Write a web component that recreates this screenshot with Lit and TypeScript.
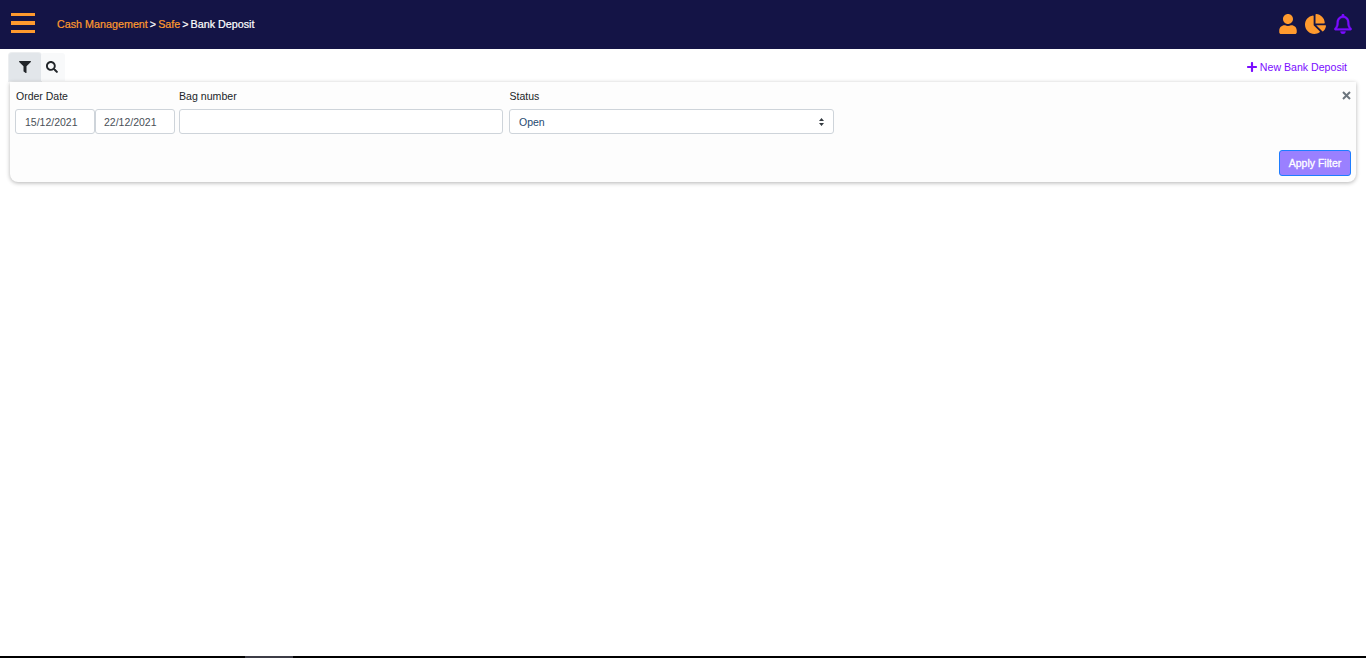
import { LitElement, html, css } from "lit";
import { customElement } from "lit/decorators.js";

const bars = html`<svg width="24" height="21" viewBox="0 0 24 21"><path fill="#ff9a2e" d="M0 0h24v3H0zM0 8h24v4H0zM0 17h24v3H0z"/></svg>`;
const user = html`<svg width="18" height="20" viewBox="0 0 448 512"><path fill="#ff9a2e" d="M224 256c70.7 0 128-57.3 128-128S294.700 0 224 0 96 57.300 96 128s57.300 128 128 128zm89.600 32h-16.700c-22.200 10.200-46.900 16-72.900 16s-50.600-5.800-72.900-16h-16.700C60.200 288 0 348.200 0 422.400V464c0 26.500 21.500 48 48 48h352c26.500 0 48-21.500 48-48v-41.600c0-74.200-60.200-134.400-134.400-134.400z"/></svg>`;
const pie = html`<svg width="21" height="20" viewBox="0 0 544 512"><path fill="#ff9a2e" d="M527.790 288H290.500l158.030 158.030c6.040 6.040 15.980 6.530 22.190.68 38.700-36.460 65.320-85.610 73.130-140.860 1.340-9.460-6.510-17.850-16.060-17.850zm-15.830-64.800C503.720 103.740 408.260 8.280 288.800.04 279.680-.59 272 7.100 272 16.240V240h223.770c9.140 0 16.820-7.680 16.190-16.800zM224 288V50.710c0-9.550-8.390-17.400-17.840-16.060C86.990 51.490-4.100 155.600.14 280.370 4.500 408.510 114.830 513.590 243.030 511.980c50.400-.63 96.970-16.870 135.260-44.030 7.900-5.600 8.420-17.230 1.570-24.080L224 288z"/></svg>`;
const bell = html`<svg width="18" height="20" viewBox="0 0 448 512"><path fill="#7a0cff" stroke="#7a0cff" stroke-width="10" d="M439.390 362.290c-19.320-20.760-55.470-51.990-55.470-154.290 0-77.700-54.480-139.900-127.940-155.160V32c0-17.670-14.320-32-31.980-32s-31.980 14.330-31.980 32v20.840C118.560 68.100 64.080 130.300 64.080 208c0 102.300-36.150 133.530-55.470 154.290-6 6.450-8.660 14.160-8.610 21.710.11 16.400 12.980 32 32.100 32h383.800c19.120 0 32-15.600 32.100-32 .05-7.550-2.610-15.270-8.610-21.710zM67.530 368c21.220-27.970 44.420-74.330 44.530-159.420 0-.2-.06-.38-.06-.58 0-61.860 50.140-112 112-112s112 50.140 112 112c0 .2-.06.380-.06.580.11 85.100 23.310 131.460 44.530 159.420H67.530zM224 512c35.320 0 63.970-28.650 63.970-64H160.030c0 35.350 28.650 64 63.970 64z"/></svg>`;
const filter = html`<svg width="12" height="12" viewBox="0 0 512 512"><path fill="#212529" d="M487.976 0H24.028C2.710 0-8.047 25.866 7.058 40.971L192 225.941V432c0 7.831 3.821 15.170 10.237 19.662l80 55.980C298.020 518.690 320 507.493 320 487.980V225.941l184.947-184.970C520.021 25.896 509.338 0 487.976 0z"/></svg>`;
const search = html`<svg width="12" height="12" viewBox="0 0 512 512"><path fill="#212529" d="M505 442.700L405.300 343c-4.500-4.500-10.600-7-17-7H372c27.600-35.300 44-79.700 44-128C416 93.100 322.900 0 208 0S0 93.100 0 208s93.100 208 208 208c48.300 0 92.700-16.400 128-44v16.300c0 6.400 2.500 12.500 7 17l99.700 99.700c9.400 9.400 24.600 9.400 33.900 0l28.300-28.300c9.400-9.400 9.400-24.600.1-34zM208 336c-70.700 0-128-57.200-128-128 0-70.700 57.200-128 128-128 70.700 0 128 57.200 128 128 0 70.700-57.200 128-128 128z"/></svg>`;
const plus = html`<svg width="10" height="12" viewBox="0 0 448 512"><path fill="#7a0cff" d="M416 208H272V64c0-17.670-14.330-32-32-32h-32c-17.670 0-32 14.330-32 32v144H32c-17.670 0-32 14.330-32 32v32c0 17.670 14.330 32 32 32h144v144c0 17.670 14.330 32 32 32h32c17.670 0 32-14.330 32-32V304h144c17.670 0 32-14.330 32-32v-32c0-17.670-14.330-32-32-32z"/></svg>`;
const times = html`<svg width="9" height="9" viewBox="0 0 9 9"><path stroke="#6c757d" stroke-width="2" d="M1 1l7 7M8 1L1 8"/></svg>`;
const updown = html`<svg width="5" height="8" viewBox="0 0 5 8"><path fill="#343a40" d="M2.500 0L5 3H0zM2.500 8L0 5h5z"/></svg>`;

@customElement("app-root")
export class AppRoot extends LitElement {
  static styles = css`
    :host { display: flex; flex-direction: column; height: 658px; background: #fff; font-family: "Liberation Sans", Arial, sans-serif; font-size: 10.500px; color: #212529; overflow: hidden; }
    .top { height: 49px; flex: none; background: #141446; display: flex; align-items: center; padding: 0 14px 2px 11px; box-sizing: border-box; }
    .burger { display: flex; width: 24px; margin-right: 22px; }
    .crumbs { display: flex; gap: 2px; color: #fff; font-size: 10.750px; -webkit-text-stroke: 0.2px; }
    .crumbs .o { color: #ff9a2e; }
    .icons { margin-left: auto; display: flex; align-items: center; gap: 8px; }
    .bar { height: 32px; flex: none; display: flex; align-items: stretch; padding: 0 19px 0 9px; }
    .tab { display: flex; align-items: center; justify-content: center; height: 28px; margin-top: 4px; background: #f8f9fa; border-radius: 3px 3px 0 0; }
    .tab.f { width: 32px; background: #e2e6ea; box-shadow: 0 0 0 1px #eceef0; }
    .tab.s { width: 22px; padding-right: 2px; }
    .new { margin-left: auto; display: flex; align-items: center; gap: 3px; color: #7a0cff; font-size: 10.600px; padding-top: 4px; }
    .card { margin: 1px 10px 0; height: 100px; flex: none; box-sizing: border-box; background: #fdfdfd; border-radius: 0 0 8px 8px; box-shadow: 0 1px 4px rgba(0,0,0,.3); padding: 8px 5px 6px 5px; display: flex; flex-direction: column; position: relative; }
    .fields { display: flex; }
    .field { display: flex; flex-direction: column; }
    label { height: 19px; line-height: 12px; }
    .inputs { display: flex; }
    .in { height: 25px; box-sizing: border-box; background: #fff; border: 1px solid #ced4da; border-radius: 3px; color: #495057; display: flex; align-items: center; }
    .date { width: 80px; padding-left: 9px; }
    .date + .date { padding-left: 8px; }
    .bag { width: 324px; margin-left: 4px; }
    .status { width: 325px; margin-left: 6px; padding: 0 9px 0 9px; color: #1f4a70; justify-content: space-between; }
    .l0 { padding-left: 1px; }
    .l1 { padding-left: 4px; font-size: 10.600px; }
    .l2 { padding-left: 6.500px; }
    .close { position: absolute; top: 9px; right: 5px; display: flex; }
    .apply { margin-top: auto; align-self: flex-end; width: 72px; height: 26px; box-sizing: border-box; border: 1px solid #1e7dff; border-radius: 3px; background: #9a80ff; color: #fff; font: 400 10.500px "Liberation Sans", Arial, sans-serif; -webkit-text-stroke: 0.3px; padding: 0; }
    .fill { flex: 1; }
    .foot { height: 2px; flex: none; background: #000; display: flex; }
    .foot i { width: 48px; margin-left: 245px; background: #3c3c46; }
  `;
  render() {
    return html`
      <div class="top">
        <span class="burger">${bars}</span>
        <div class="crumbs"><span class="o">Cash Management</span><span>&gt;</span><span class="o">Safe</span><span>&gt;</span><span>Bank Deposit</span></div>
        <div class="icons">${user}${pie}${bell}</div>
      </div>
      <div class="bar">
        <div class="tab f">${filter}</div>
        <div class="tab s">${search}</div>
        <div class="new">${plus}<span>New Bank Deposit</span></div>
      </div>
      <div class="card">
        <span class="close">${times}</span>
        <div class="fields">
          <div class="field"><label class="l0">Order Date</label><div class="inputs"><div class="in date">15/12/2021</div><div class="in date">22/12/2021</div></div></div>
          <div class="field"><label class="l1">Bag number</label><div class="in bag"></div></div>
          <div class="field"><label class="l2">Status</label><div class="in status"><span>Open</span>${updown}</div></div>
        </div>
        <button class="apply">Apply Filter</button>
      </div>
      <div class="fill"></div>
      <div class="foot"><i></i></div>
    `;
  }
}
